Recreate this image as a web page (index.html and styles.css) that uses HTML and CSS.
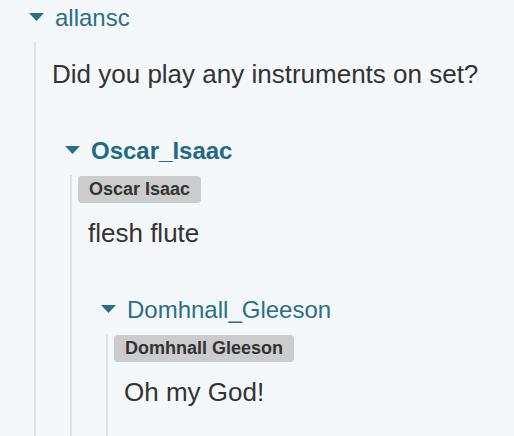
FILE: index.html
```html
<!DOCTYPE html>
<html>
<head>
<meta charset="utf-8">
<link rel="stylesheet" href="styles.css">
</head>
<body>
<div class="thread">
  <div class="comment">
    <div class="head">
      <svg class="caret" width="15" height="8" viewBox="0 0 15 8"><path d="M0 0 H15 L7.5 8 Z"/></svg>
      <span class="name">allansc</span>
    </div>
    <div class="body">
      <p class="text">Did you play any instruments on set?</p>
      <div class="comment reply">
        <div class="head">
          <svg class="caret" width="15" height="8" viewBox="0 0 15 8"><path d="M0 0 H15 L7.5 8 Z"/></svg>
          <span class="name bold">Oscar_Isaac</span>
        </div>
        <div class="body">
          <span class="badge">Oscar Isaac</span>
          <p class="text">flesh flute</p>
          <div class="comment reply">
            <div class="head">
              <svg class="caret" width="15" height="8" viewBox="0 0 15 8"><path d="M0 0 H15 L7.5 8 Z"/></svg>
              <span class="name">Domhnall_Gleeson</span>
            </div>
            <div class="body">
              <span class="badge">Domhnall Gleeson</span>
              <p class="text">Oh my God!</p>
            </div>
          </div>
        </div>
      </div>
    </div>
  </div>
</div>
</body>
</html>
```
FILE: styles.css
```css
html, body {
  margin: 0;
  background: #f5f8fa;
  height: 100%;
  overflow: hidden;
}
body {
  font-family: "Liberation Sans", Arial, sans-serif;
  color: #333;
}
.thread {
  padding: 3px 0 0 29px;
  height: 433px;
  overflow: hidden;
}
.comment {
  display: flex;
  flex-direction: column;
}
.reply {
  margin: 30px 0 0 23px;
}
.head {
  display: flex;
  align-items: flex-start;
  height: 30px;
}
.caret {
  margin-top: 10px;
  fill: #2a6f87;
  flex: none;
}
.name {
  margin-left: 11px;
  font-size: 24px;
  line-height: 30px;
  color: #2a6f87;
}
.name.bold {
  font-weight: bold;
  color: #206a84;
}
.body {
  margin: 9px 0 0 5px;
  border-left: 2px solid #dde2e5;
  padding-left: 6px;
  display: flex;
  flex-direction: column;
  align-items: flex-start;
  min-height: 400px;
}
.reply .body {
  min-height: 0;
  padding-bottom: 40px;
}
.badge {
  margin: 1px 0 -2px;
  padding: 4px 11px;
  background: #cccccc;
  border-radius: 4px;
  font-size: 18px;
  line-height: 19px;
  font-weight: bold;
  color: #333;
}
.text {
  margin: 0;
  padding: 16px 0 16px 10px;
  font-size: 26px;
  line-height: 32px;
}
```
